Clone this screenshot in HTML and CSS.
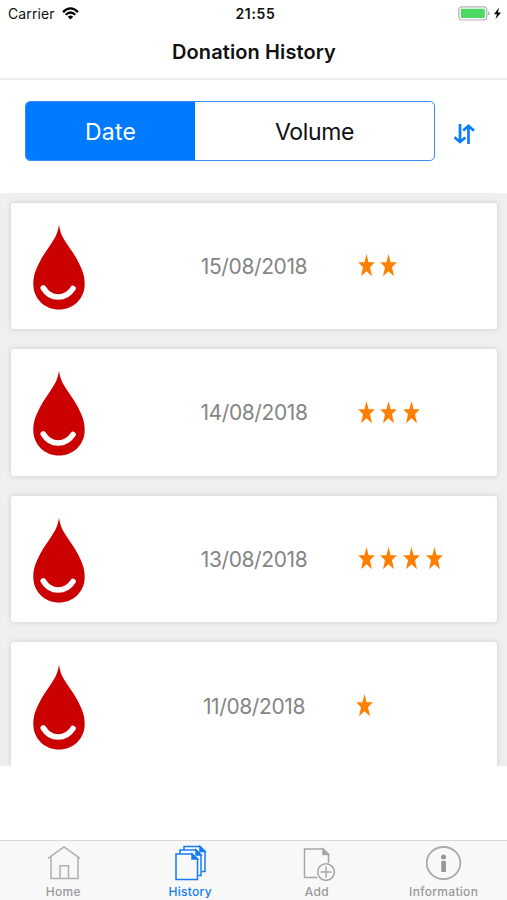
FILE: index.html
```html
<!DOCTYPE html>
<html lang="en">
<head>
<meta charset="utf-8">
<title>Donation History</title>
<link rel="stylesheet" href="styles.css">
</head>
<body>
<svg class="defs" aria-hidden="true">
  <symbol id="drop" viewBox="0 0 52 86">
    <path fill="#cb0000" d="M26 .5C27 9 30 14 34 20C38 26 41 30 44.300 36C49 45 51.700 51 51.700 60C51.700 75 40 85.500 26 85.500C12 85.500 .3 75 .3 60C.3 51 3 45 7.700 36C11 30 14 26 18 20C22 14 25 9 26 .5Z"/>
    <path fill="none" stroke="#fff" stroke-width="5.600" stroke-linecap="round" d="M10.300 64C17.500 76 32.500 76 40 64.500"/>
  </symbol>
  <symbol id="star" viewBox="0 0 17 23">
    <path fill="#ff8000" d="M8.500 0L10.600 8.200H16.800L12 13.200L14 22.300L8.500 17.200L3 22.300L5 13.200L.2 8.200H6.400Z"/>
  </symbol>
</svg>
<div class="app">
  <header class="header">
    <div class="status">
      <div class="carrier"><span>Carrier</span>
        <svg width="17" height="13" viewBox="0 0 17 13"><g fill="none" stroke="#000" stroke-width="2.300"><path d="M1 5.100Q8.500-2.500 16 5.100"/><path d="M3.700 7.800Q8.500 3.100 13.300 7.800"/></g><path d="M5.800 9.700Q8.500 7.500 11.200 9.700L8.500 12.500Z"/></svg>
      </div>
      <div class="clock">21:55</div>
      <div class="power">
        <svg width="44" height="16" viewBox="0 0 44 16"><rect x=".8" y=".8" width="28" height="13.200" rx="3" fill="#fff" stroke="#b4b4b4" stroke-width="1.200"/><rect x="2.800" y="2.800" width="24" height="9.200" rx="1" fill="#4cd964"/><path d="M30.300 5.300Q33 7.400 30.300 9.500Z" fill="#999"/><path d="M41 1.500L36 8.300H39L37.500 13.300L43 6.500H39.900Z"/></svg>
      </div>
    </div>
    <h1 class="title">Donation History</h1>
  </header>
  <section class="sort">
    <div class="segments">
      <div class="segment active"><span>Date</span></div>
      <div class="segment volume"><span>Volume</span></div>
    </div>
    <svg class="order" width="22" height="22" viewBox="0 0 22 22" fill="none" stroke="#0a7cff" stroke-width="2.700"><path d="M7 1V18M1.500 14.300L7 19L12.300 14.500M15.500 21V3.500M10.200 7.500L15.500 2.700L21 7.700"/></svg>
  </section>
  <main class="list">
    <article class="card"><svg class="drop"><use href="#drop"/></svg><span class="date">15/08/2018</span><div class="stars"><svg><use href="#star"/></svg><svg><use href="#star"/></svg></div></article>
    <article class="card"><svg class="drop"><use href="#drop"/></svg><span class="date">14/08/2018</span><div class="stars"><svg><use href="#star"/></svg><svg><use href="#star"/></svg><svg><use href="#star"/></svg></div></article>
    <article class="card"><svg class="drop"><use href="#drop"/></svg><span class="date">13/08/2018</span><div class="stars"><svg><use href="#star"/></svg><svg><use href="#star"/></svg><svg><use href="#star"/></svg><svg><use href="#star"/></svg></div></article>
    <article class="card"><svg class="drop"><use href="#drop"/></svg><span class="date">11/08/2018</span><div class="stars single"><svg><use href="#star"/></svg></div></article>
  </main>
  <nav class="tabs">
    <div class="tab">
      <svg width="36" height="36" viewBox="0 0 36 36" fill="none" stroke="#b0b0b0" stroke-width="1.500"><path d="M3 13.300L19 2L35 13.300M6 11.500V33.500H33V11.500M15 33V20.700H23.500V33"/></svg><span>Home</span>
    </div>
    <div class="tab selected">
      <svg width="36" height="36" viewBox="0 0 36 36" fill="none" stroke="#137cf5" stroke-width="1.500"><path d="M4 9H20L25.500 14V34.500H4ZM8 8.500V5H24L29 10V30.500H26.500M12 4.500V1.500H28L33 6.500V26.500H30"/><path fill="#137cf5" d="M20 9V14H25.500ZM24 5V10H29ZM28 1.500V6.500H33Z"/></svg><span>History</span>
    </div>
    <div class="tab">
      <svg width="36" height="36" viewBox="0 0 36 36" fill="none" stroke="#a6a6a6" stroke-width="1.500"><path d="M18.500 32.500H5.500V4H24L29.500 9.500V18"/><path fill="#a6a6a6" d="M24 4V9.500H29.500Z"/><circle cx="27" cy="27" r="8.300"/><path d="M27 21.500V32.500M21.500 27H32.500"/></svg><span>Add</span>
    </div>
    <div class="tab">
      <svg width="36" height="36" viewBox="0 0 36 36"><ellipse cx="17.500" cy="18" rx="16.800" ry="16" fill="none" stroke="#aaa" stroke-width="1.800"/><circle cx="17.500" cy="12" r="2.500" fill="#969696"/><rect x="15.300" y="16" width="4.600" height="11" fill="#969696"/></svg><span>Information</span>
    </div>
  </nav>
</div>
</body>
</html>
```
FILE: styles.css
```css
* { box-sizing: border-box; }
body { margin: 0; background: #fff; color: #111; font-family: Inter, "Liberation Sans", sans-serif; }
svg { display: block; flex: none; }
.defs { display: none; }
.app { width: 507px; height: 900px; display: flex; flex-direction: column; overflow: hidden; }
.header { height: 80px; border-bottom: 2px solid #ececec; }
.status { display: grid; grid-template-columns: 1fr auto 1fr; height: 27px; align-items: center; padding: 0 5px 0 8px; }
.carrier { display: flex; align-items: center; gap: 7px; font-size: 14px; letter-spacing: .1px; }
.clock { padding-left: 1px; font-size: 14px; font-weight: 600; letter-spacing: .7px; }
.power { justify-self: end; }
.title { margin: 11px 0 0; padding-left: 1px; text-align: center; font-size: 20px; line-height: 28px; font-weight: 600; letter-spacing: .1px; }
.sort { height: 113px; display: flex; align-items: flex-start; padding: 21px 0 0 25px; }
.segments { width: 410px; height: 60px; display: flex; border: 1.500px solid #378ff2; border-radius: 5px; overflow: hidden; }
.segment { flex: 1; display: flex; align-items: center; justify-content: center; font-size: 23px; letter-spacing: .2px; padding-top: 1px; }
.active { flex: 0 0 169px; background: #007aff; color: #fff; }
.volume { letter-spacing: -.35px; }
.order { margin: 21.500px 0 0 17.500px; }
.list { height: 573px; background: #efefef; overflow: hidden; display: flex; flex-direction: column; gap: 20px; padding: 9.500px 10px 0 11px; }
.card { flex: none; height: 126.600px; display: grid; grid-template-columns: 147px 192px 1fr; align-items: center; background: #fff; border-radius: 3px; box-shadow: 0 0 5px #ccc; }
.drop { width: 52px; height: 86px; margin: 2px 0 0 22.400px; }
.date { justify-self: center; margin-top: 2px; color: #858585; font-size: 21px; line-height: 26px; letter-spacing: -.4px; }
.stars { display: flex; gap: 5.700px; padding-left: 7.500px; }
.stars svg { width: 17px; height: 23px; }
.stars.single { padding-left: 6px; }
.tabs { margin-top: auto; height: 60px; display: grid; grid-template-columns: repeat(4, 1fr); background: #f8f8f8; border-top: 1px solid #d8d8d8; }
.tab { display: flex; flex-direction: column; align-items: center; padding-top: 4px; color: #999; font-size: 12px; line-height: 15px; font-weight: 500; letter-spacing: .3px; }
.tab span { margin-top: 3px; }
.selected { color: #137cf5; }
```
